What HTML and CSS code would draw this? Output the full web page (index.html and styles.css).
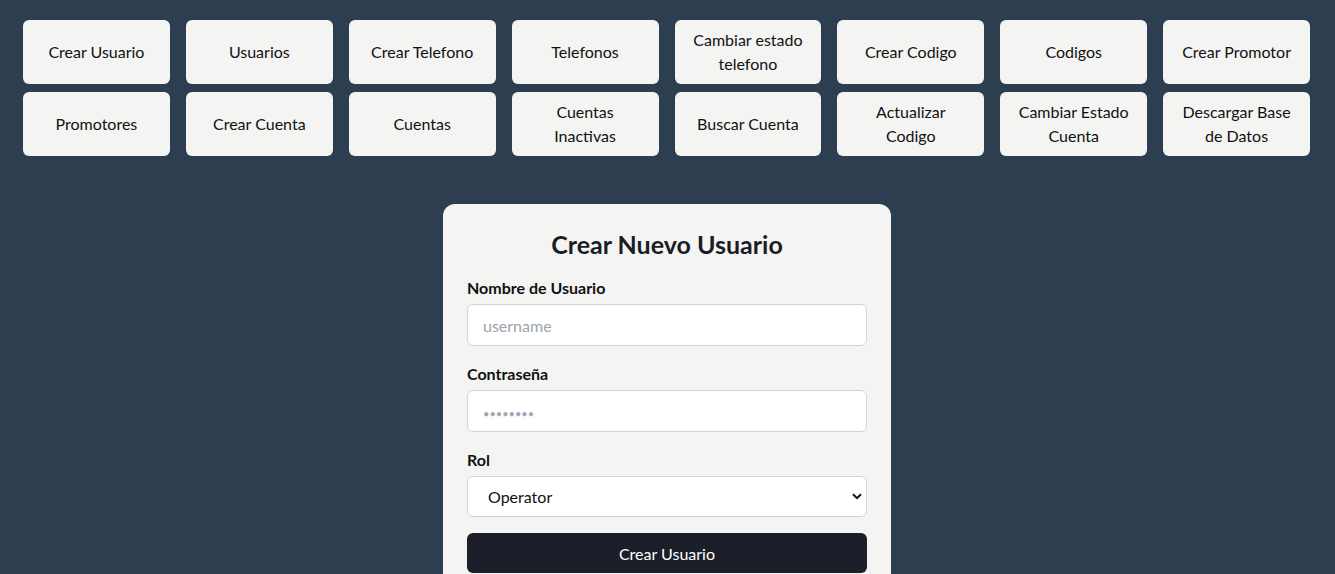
FILE: index.html
```html
<!DOCTYPE html>
<html lang="es">
<head>
<meta charset="utf-8">
<title>Crear Usuario</title>
<link rel="stylesheet" href="styles.css">
</head>
<body>
<nav class="menu">
  <button class="menu-btn">Crear Usuario</button>
  <button class="menu-btn">Usuarios</button>
  <button class="menu-btn">Crear Telefono</button>
  <button class="menu-btn">Telefonos</button>
  <button class="menu-btn">Cambiar estado telefono</button>
  <button class="menu-btn">Crear Codigo</button>
  <button class="menu-btn">Codigos</button>
  <button class="menu-btn">Crear Promotor</button>
  <button class="menu-btn">Promotores</button>
  <button class="menu-btn">Crear Cuenta</button>
  <button class="menu-btn">Cuentas</button>
  <button class="menu-btn">Cuentas Inactivas</button>
  <button class="menu-btn">Buscar Cuenta</button>
  <button class="menu-btn">Actualizar Codigo</button>
  <button class="menu-btn">Cambiar Estado Cuenta</button>
  <button class="menu-btn">Descargar Base de Datos</button>
</nav>
<main class="main">
  <form class="card">
    <h2 class="card-title">Crear Nuevo Usuario</h2>
    <label class="field">
      <span class="field-label">Nombre de Usuario</span>
      <input class="field-input" type="text" placeholder="username">
    </label>
    <label class="field">
      <span class="field-label">Contraseña</span>
      <input class="field-input field-password" type="password" placeholder="••••••••">
    </label>
    <label class="field">
      <span class="field-label">Rol</span>
      <select class="field-select">
        <option>Operator</option>
        <option>Admin</option>
      </select>
    </label>
    <button type="button" class="submit">Crear Usuario</button>
  </form>
</main>
</body>
</html>
```
FILE: styles.css
```css
* { box-sizing: border-box; }
html, body { margin: 0; }
body {
  background: #2c3e50;
  font-family: Lato, "Noto Sans", sans-serif;
  color: #111;
  min-height: 100vh;
}
.menu {
  display: grid;
  grid-template-columns: repeat(8, 1fr);
  gap: 8px 16px;
  padding: 20px 25px 0 23px;
}
.menu-btn {
  height: 64px;
  background: #f4f4f2;
  border: none;
  border-radius: 6px;
  font-family: inherit;
  font-size: 16px;
  line-height: 24px;
  color: #111;
  padding: 0 14px;
  text-align: center;
}
.main {
  display: flex;
  justify-content: center;
  padding: 48px 1px 0 0;
}
.card {
  width: 448px;
  background: #f4f4f2;
  border-radius: 12px;
  padding: 24px;
  display: flex;
  flex-direction: column;
}
.card-title {
  margin: 0 0 16px;
  text-align: center;
  font-size: 25px;
  line-height: 32px;
  font-weight: 700;
  color: #1a1d27;
}
.field {
  display: flex;
  flex-direction: column;
  margin-bottom: 16px;
}
.field-label {
  font-weight: 700;
  font-size: 16px;
  line-height: 24px;
  margin-bottom: 4px;
  color: #111;
}
.field-input, .field-select {
  height: 42px;
  border: 1px solid #d4d4d8;
  border-radius: 6px;
  background: #fff;
  font-family: inherit;
  font-size: 16px;
  padding: 0 15px;
  color: #111;
}
.field-input::placeholder { color: #9ca3af; }
.field-password::placeholder { font-size: 11px; color: #a1a7b3; }
.field-select {
  height: 41px;
  appearance: none;
  -webkit-appearance: none;
  padding: 0 20px;
  background: #fff url("data:image/svg+xml;utf8,<svg xmlns='http://www.w3.org/2000/svg' width='10' height='7' viewBox='0 0 10 7'><path d='M1 1.2 L5 5.2 L9 1.2' fill='none' stroke='%23111' stroke-width='2'/></svg>") no-repeat right 4px center;
}
.submit {
  height: 40px;
  border: none;
  border-radius: 6px;
  background: #1c1f2a;
  color: #fff;
  font-family: inherit;
  font-size: 16px;
}
```
